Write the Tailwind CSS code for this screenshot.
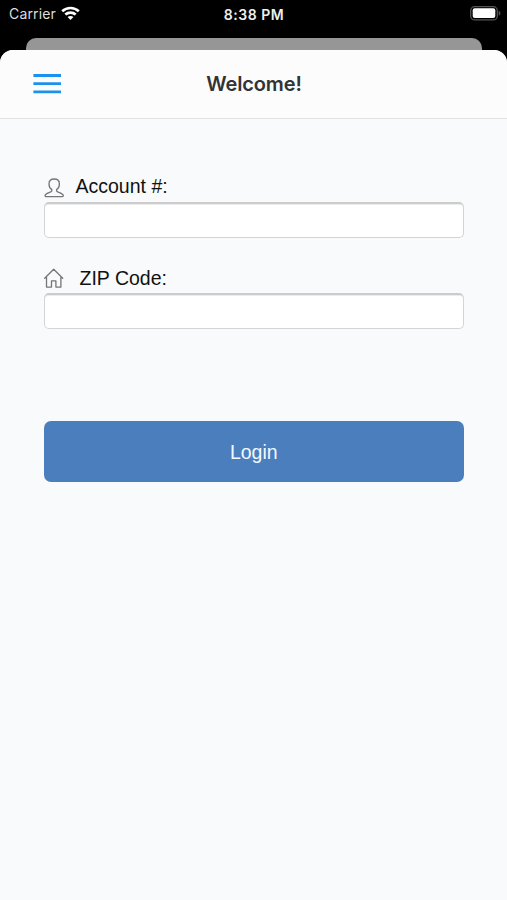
<!DOCTYPE html>
<html lang="en">
<head>
<meta charset="utf-8">
<title>Welcome!</title>
<script src="https://cdn.jsdelivr.net/npm/@tailwindcss/browser@4"></script>
</head>
<body class="flex h-[900px] w-[507px] flex-col overflow-hidden bg-black font-['Liberation_Sans',Arial,sans-serif]">
  <div class="grid h-[38px] shrink-0 grid-cols-3 items-start pt-[5px] font-['Inter',sans-serif]">
    <div class="flex h-4 items-center pl-[9px] text-[#dedede]">
      <span class="pt-[2px] text-[14px] leading-4 tracking-[0.15px]">Carrier</span>
      <svg class="ml-[5px] h-[14px] w-[19px]" viewBox="0 0 19 14" fill="none" stroke="#fff" stroke-width="2.7">
        <path d="M1.2 5.2C5.9 .9 13.1 .9 17.8 5.2"/>
        <path d="M4.3 8.6c3-2.700 7.400-2.700 10.400 0"/>
        <path d="M9.5 14 6.600 11.100c1.600-1.500 4.200-1.500 5.800 0z" fill="#fff" stroke="none"/>
      </svg>
    </div>
    <div class="pt-px pl-px text-center text-[14px] leading-[17px] font-semibold tracking-[0.5px] text-[#eee]">8:38 PM</div>
    <div class="flex justify-end pt-[1px] pr-[6px]">
      <svg class="h-[15px] w-[31px]" viewBox="0 0 31 15">
        <rect x=".7" y=".7" width="26.6" height="13.2" rx="4" fill="none" stroke="#555" stroke-width="1.3"/>
        <rect x="2.7" y="2.3" width="22.6" height="9.7" rx="2" fill="#fff"/>
        <path d="M28.7 4.8c2.3.8 2.3 4.2 0 5z" fill="#555"/>
      </svg>
    </div>
  </div>
  <div class="mr-[25px] ml-[26px] h-3 shrink-0 rounded-t-[10px] bg-[#969696]"></div>
  <main class="flex-1 overflow-hidden rounded-t-[13px] bg-[#f8fafc]">
    <header class="grid h-[69px] grid-cols-3 items-center border-b border-[#dfe1e2] bg-[#fcfcfc]">
      <button class="mb-px ml-[33px] w-7" aria-label="Menu">
        <svg class="block h-[21px] w-7" viewBox="0 0 28 21" stroke="#1c92ec" stroke-width="2.8">
          <path d="M.4 2.500h28M.4 10.700h28M.4 18.900h28"/>
        </svg>
      </button>
      <h1 class="pl-px text-center font-['Inter',sans-serif] text-[20px] font-semibold tracking-[-0.15px] text-[#333]">Welcome!</h1>
    </header>
    <form class="mr-[43px] ml-[43.5px] flex flex-col pt-[55px]">
      <label class="flex h-[28px] items-start text-[19.5px] leading-6 text-[#111]">
        <svg class="mt-[4px] mr-[11px] h-[20px] w-[21px]" viewBox="0 0 21 20" fill="none" stroke="#747678" stroke-width="1.3" stroke-linejoin="round">
          <path d="M7.8 11.600C5.600 10.200 5 8.300 5 5.900 5 2.800 6.900 1 10.200 1s5.200 1.800 5.200 4.900c0 2.400-.6 4.300-2.800 5.700v1.400c.6 1.500 6.700 2 6.700 4.500 0 1-.4 1.200-1.200 1.200H2.300c-.8 0-1.200-.2-1.200-1.200 0-2.500 6.100-3 6.700-4.500z"/>
        </svg>
        <span>Account #:</span>
      </label>
      <input aria-label="Account number" class="h-[36px] w-full rounded-[5px] border border-t-2 border-[#d3d4d5] border-t-[#cbcccd] bg-white shadow-[inset_0_1px_0_#ececec]">
      <label class="mt-[28px] flex h-[27px] items-start text-[19.5px] leading-6 text-[#111]">
        <svg class="mt-[2px] mr-[15px] h-[20px] w-[21px]" viewBox="0 0 21 20" fill="none" stroke="#747678" stroke-width="1.3" stroke-linejoin="round" stroke-linecap="round">
          <path d="M.7 10.200 9.700 1.300l9 8.900M2.500 8.600v10.500h5v-6.200h4.400v6.200h5V8.600"/>
        </svg>
        <span>ZIP Code:</span>
      </label>
      <input aria-label="ZIP code" class="h-[36px] w-full rounded-[5px] border border-t-2 border-[#d3d4d5] border-t-[#cbcccd] bg-white shadow-[inset_0_1px_0_#ececec]">
      <button type="button" class="mt-[92px] h-[61px] w-full rounded-[7px] bg-[#4a7ebd] pt-[2px] text-[19.5px] text-[#f4f8ff]">Login</button>
    </form>
  </main>
</body>
</html>
